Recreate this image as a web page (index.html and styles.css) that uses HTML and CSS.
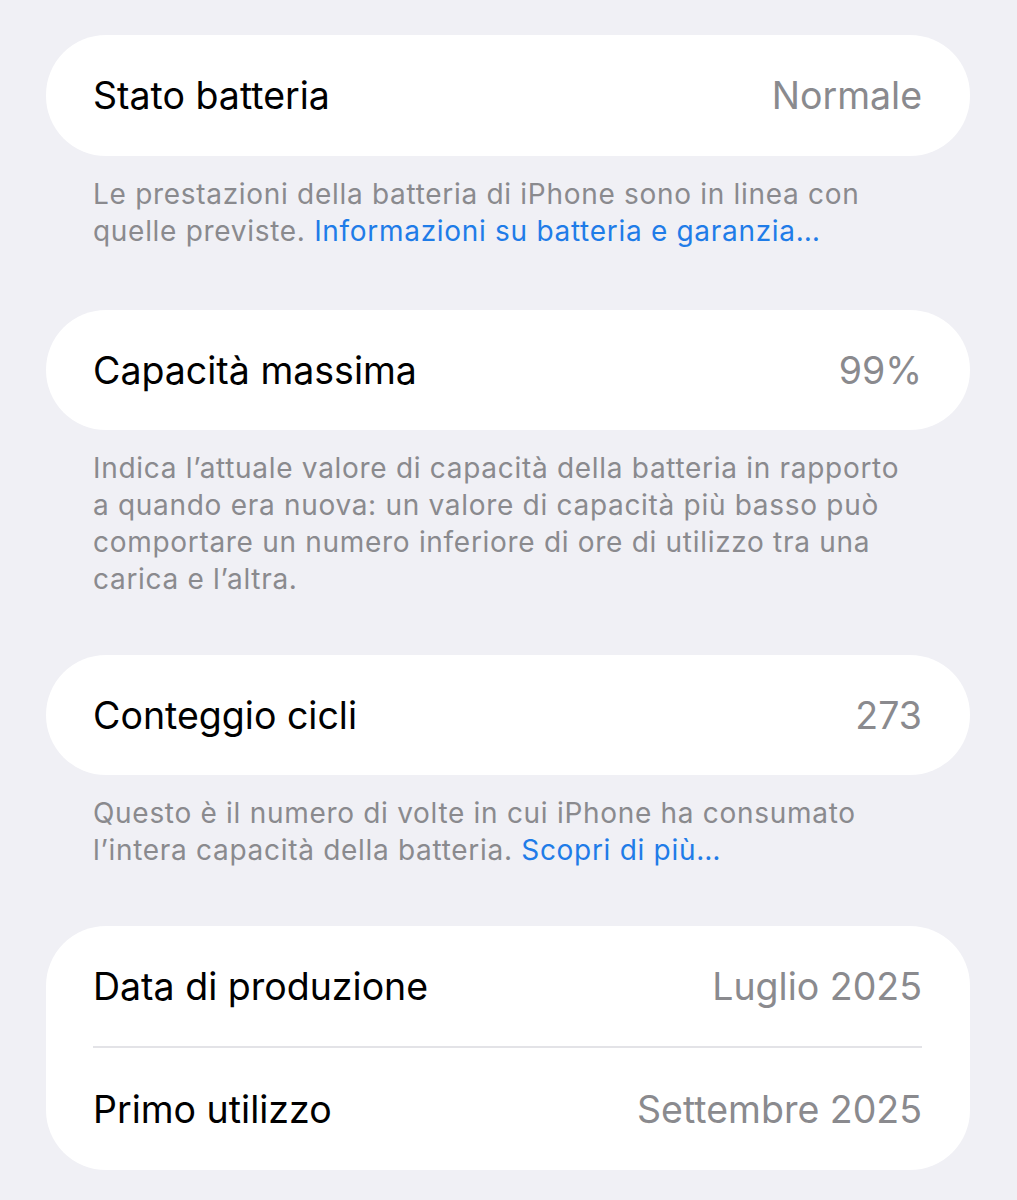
FILE: index.html
```html
<!DOCTYPE html>
<html lang="it">
<head>
<meta charset="utf-8">
<title>Batteria</title>
<link rel="stylesheet" href="styles.css">
</head>
<body>
<main class="page">
  <section class="group">
    <div class="card">
      <div class="row"><span class="label">Stato batteria</span><span class="value">Normale</span></div>
    </div>
    <p class="footer">Le prestazioni della batteria di iPhone sono in linea con quelle previste. <a class="link" href="#">Informazioni su batteria e garanzia…</a></p>
  </section>
  <section class="group">
    <div class="card">
      <div class="row"><span class="label">Capacità massima</span><span class="value">99%</span></div>
    </div>
    <p class="footer">Indica l’attuale valore di capacità della batteria in rapporto a quando era nuova: un valore di capacità più basso può comportare un numero inferiore di ore di utilizzo tra una carica e l’altra.</p>
  </section>
  <section class="group">
    <div class="card">
      <div class="row"><span class="label">Conteggio cicli</span><span class="value">273</span></div>
    </div>
    <p class="footer">Questo è il numero di volte in cui iPhone ha consumato l’intera capacità della batteria. <a class="link" href="#">Scopri di più…</a></p>
  </section>
  <section class="group">
    <div class="card">
      <div class="row"><span class="label">Data di produzione</span><span class="value">Luglio 2025</span></div>
      <div class="row"><span class="label">Primo utilizzo</span><span class="value">Settembre 2025</span></div>
    </div>
  </section>
</main>
</body>
</html>
```
FILE: styles.css
```css
html, body {
  margin: 0;
  padding: 0;
  background: #f0f0f5;
}
body {
  font-family: Inter, "Noto Sans", "Liberation Sans", sans-serif;
  -webkit-font-smoothing: antialiased;
}
.page {
  padding: 35px 47px 0 46px;
}
.group {
  margin: 0 0 57px 0;
}
.group:first-child {
  margin-bottom: 60px;
}
.card {
  background: #ffffff;
  border-radius: 60px;
  padding: 0 48px 0 47px;
}
.row {
  display: flex;
  justify-content: space-between;
  align-items: center;
  height: 120px;
  box-sizing: border-box;
}
.group:first-child .row {
  height: 121px;
}
.row + .row {
  border-top: 2px solid #e3e3e7;
  height: 124px;
}
.label {
  font-size: 37.5px;
  color: #000000;
}
.value {
  font-size: 37.5px;
  color: #8a8a8e;
}
.footer {
  margin: 0;
  padding: 20px 48px 0 47px;
  font-size: 28px;
  line-height: 37px;
  color: #8a8a8e;
  letter-spacing: 0.7px;
}
.link {
  color: #1f7ce8;
  text-decoration: none;
}
```
